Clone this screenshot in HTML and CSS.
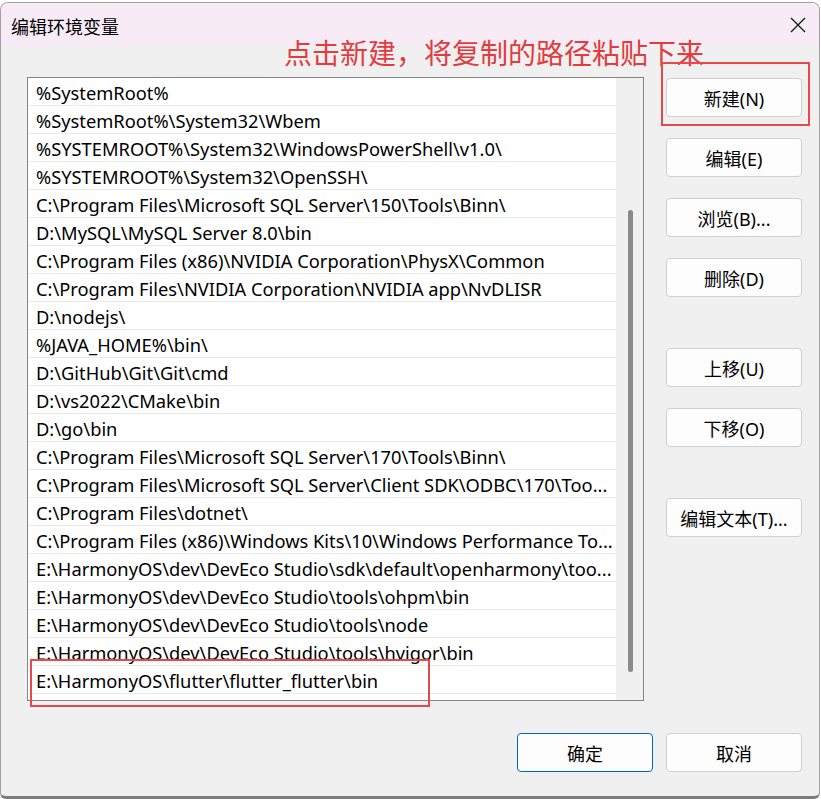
FILE: index.html
```html
<!DOCTYPE html>
<html>
<head>
    <title>编辑环境变量</title>
    <link rel="stylesheet" href="styles.css">
</head>
<body>
    <div class="window">
        <div class="titlebar">
            <span class="title">编辑环境变量</span>
            <svg class="close" width="16" height="16" viewBox="0 0 16 16">
                <path d="M1 1 L15 15 M15 1 L1 15" stroke="#1b1b1b" stroke-width="1.4" fill="none"/>
            </svg>
        </div>

        <div class="content">
            <div class="list">
                <div class="rows">
                    <div class="row">%SystemRoot%</div>
                    <div class="row">%SystemRoot%\System32\Wbem</div>
                    <div class="row">%SYSTEMROOT%\System32\WindowsPowerShell\v1.0\</div>
                    <div class="row">%SYSTEMROOT%\System32\OpenSSH\</div>
                    <div class="row">C:\Program Files\Microsoft SQL Server\150\Tools\Binn\</div>
                    <div class="row">D:\MySQL\MySQL Server 8.0\bin</div>
                    <div class="row">C:\Program Files (x86)\NVIDIA Corporation\PhysX\Common</div>
                    <div class="row">C:\Program Files\NVIDIA Corporation\NVIDIA app\NvDLISR</div>
                    <div class="row">D:\nodejs\</div>
                    <div class="row">%JAVA_HOME%\bin\</div>
                    <div class="row">D:\GitHub\Git\Git\cmd</div>
                    <div class="row">D:\vs2022\CMake\bin</div>
                    <div class="row">D:\go\bin</div>
                    <div class="row">C:\Program Files\Microsoft SQL Server\170\Tools\Binn\</div>
                    <div class="row">C:\Program Files\Microsoft SQL Server\Client SDK\ODBC\170\Too...</div>
                    <div class="row">C:\Program Files\dotnet\</div>
                    <div class="row">C:\Program Files (x86)\Windows Kits\10\Windows Performance To...</div>
                    <div class="row">E:\HarmonyOS\dev\DevEco Studio\sdk\default\openharmony\too...</div>
                    <div class="row">E:\HarmonyOS\dev\DevEco Studio\tools\ohpm\bin</div>
                    <div class="row">E:\HarmonyOS\dev\DevEco Studio\tools\node</div>
                    <div class="row">E:\HarmonyOS\dev\DevEco Studio\tools\hvigor\bin</div>
                    <div class="row">E:\HarmonyOS\flutter\flutter_flutter\bin</div>
                    <div class="row"></div>
                </div>
                <div class="scrollbar">
                    <div class="thumb"></div>
                </div>
            </div>

            <div class="side">
                <button class="btn">新建(N)</button>
                <button class="btn">编辑(E)</button>
                <button class="btn">浏览(B)...</button>
                <button class="btn">删除(D)</button>
                <button class="btn spaced">上移(U)</button>
                <button class="btn">下移(O)</button>
                <button class="btn spaced">编辑文本(T)...</button>
            </div>
        </div>

        <div class="footer">
            <button class="btn default">确定</button>
            <button class="btn">取消</button>
        </div>

        <!-- annotations drawn over the dialog -->
        <div class="note">点击新建，将复制的路径粘贴下来</div>
        <div class="mark mark-new"></div>
        <div class="mark mark-row"></div>
    </div>
</body>
</html>
```

FILE: styles.css
```css
body {
    margin: 0;
    background: #fff;
    font-family: "Noto Sans", "Noto Sans CJK SC", sans-serif;
    color: #000;
}
.window {
    position: relative;
    margin-top: 2px;
    width: 820px;
    height: 797px;
    box-sizing: border-box;
    background: #f0f0f0;
    border: 1px solid #a3a3a3;
    border-bottom: 3px solid #7d7d7d;
    border-radius: 8px 8px 6px 6px;
    overflow: hidden;
}
.titlebar {
    height: 43px;
    background: #f7ecf5;
    display: flex;
    align-items: center;
    justify-content: space-between;
    padding: 0 13px 0 10px;
}
.title {
    font-family: "Noto Sans CJK SC", sans-serif;
    font-size: 18px;
    margin-top: 2px;
}
.close {
    margin-top: 1px;
}
.content {
    display: flex;
    gap: 22px;
    padding: 31px 0 0 26px;
}
.list {
    width: 617px;
    height: 624px;
    box-sizing: border-box;
    border: 1px solid #858585;
    background: #fff;
    display: flex;
    overflow: hidden;
}
.rows {
    flex: 1;
}
.row {
    height: 27px;
    line-height: 29px;
    border-bottom: 1px solid #ebebeb;
    padding-left: 8px;
    font-size: 18.3px;
    white-space: nowrap;
    overflow: hidden;
}
.scrollbar {
    width: 27px;
    background: #f0f0f0;
    display: flex;
    justify-content: center;
}
.thumb {
    width: 5px;
    height: 462px;
    margin-top: 132px;
    margin-left: 1px;
    background: #8a8a8a;
    border-radius: 3px;
}
.side {
    display: flex;
    flex-direction: column;
    gap: 21px;
    padding-top: 1px;
}
.btn {
    width: 136px;
    height: 39px;
    box-sizing: border-box;
    background: #fdfdfd;
    border: 1px solid #d0d0d0;
    border-radius: 4px;
    font-family: "Noto Sans", "Noto Sans CJK SC", sans-serif;
    font-size: 18px;
    color: #000;
    padding: 0;
}
.btn.spaced {
    margin-top: 30px;
}
.btn.default {
    border-color: #0067c0;
}
.footer {
    display: flex;
    justify-content: flex-end;
    gap: 13px;
    padding: 32px 17px 0 0;
}
.note {
    position: absolute;
    left: 283px;
    top: 31px;
    font-family: "Noto Sans CJK SC", sans-serif;
    font-size: 28px;
    line-height: 36px;
    color: #e23b40;
}
.mark {
    position: absolute;
    border: 2px solid #e5484d;
    box-sizing: border-box;
}
.mark-new {
    left: 660px;
    top: 59px;
    width: 149px;
    height: 64px;
}
.mark-row {
    left: 29px;
    top: 656px;
    width: 400px;
    height: 48px;
}
```
